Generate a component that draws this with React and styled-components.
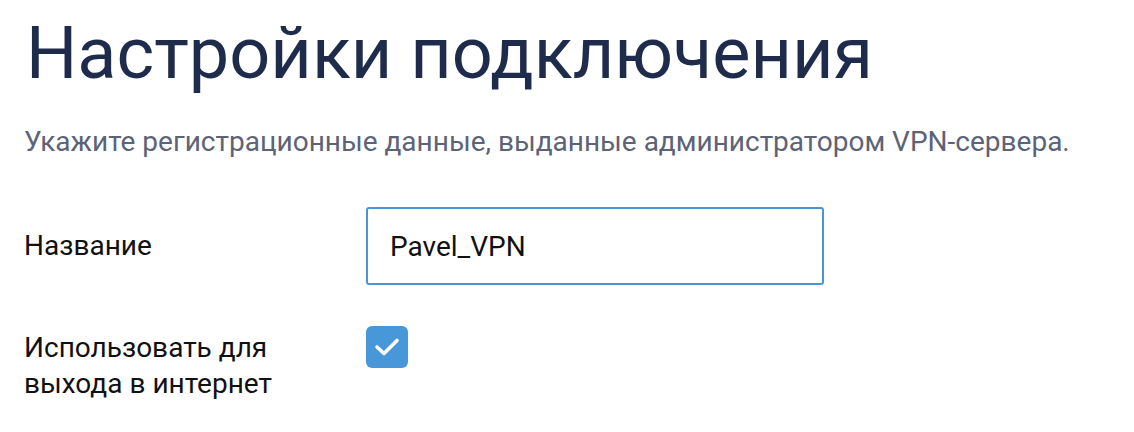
import styled, { createGlobalStyle } from 'styled-components';

const GlobalStyle = createGlobalStyle`
    body {
        margin: 0;
        background: #fff;
        font-family: Roboto, 'Noto Sans', sans-serif;
    }
`;

const Page = styled.div`
    padding: 18px 24px 0 24px;
`;

const Title = styled.h1`
    margin: 0 0 0 2px;
    font-size: 72px;
    font-weight: 400;
    line-height: 72px;
    color: #1e2b4b;
`;

const Subtitle = styled.p`
    margin: 35px 0 0 0;
    font-size: 28px;
    line-height: 34px;
    color: #5c6377;
`;

const Row = styled.div`
    display: grid;
    grid-template-columns: 342px 458px;
    align-items: ${(p) => (p.$top ? 'start' : 'center')};
    margin-top: ${(p) => p.$gap}px;
`;

const Label = styled.div`
    margin-top: ${(p) => (p.$offset ? p.$offset : 0)}px;
    font-size: 28px;
    line-height: 36px;
    color: #111;
`;

const Input = styled.input`
    box-sizing: border-box;
    width: 458px;
    height: 78px;
    padding: 0 22px;
    border: 2px solid #4a95d6;
    border-radius: 3px;
    font-family: Roboto, sans-serif;
    font-size: 28px;
    color: #111;
    outline: none;
`;

const Check = styled.div`
    width: 42px;
    height: 42px;
    border-radius: 6px;
    background: #4897d8;
`;

export default function App() {
    return (
        <>
            <GlobalStyle />
            <Page>
                <Title>Настройки подключения</Title>
                <Subtitle>Укажите регистрационные данные, выданные администратором VPN-сервера.</Subtitle>
                <Row $gap={48}>
                    <Label>Название</Label>
                    <Input defaultValue="Pavel_VPN" />
                </Row>
                <Row $gap={41} $top>
                    <Label $offset={4}>
                        Использовать для
                        <br />
                        выхода в интернет
                    </Label>
                    <Check>
                        <svg width="42" height="42" viewBox="0 0 42 42">
                            <path d="M11 21 L18 27.5 L31 14.5" fill="none" stroke="#fff" strokeWidth="3.6" strokeLinecap="round" strokeLinejoin="round" />
                        </svg>
                    </Check>
                </Row>
            </Page>
        </>
    );
}
